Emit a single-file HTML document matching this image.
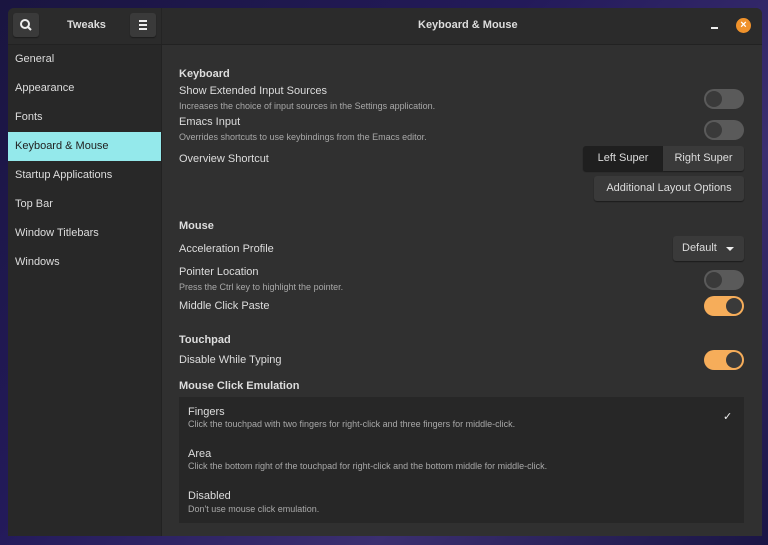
<!DOCTYPE html><html><head><style>
body{margin:0;width:768px;height:545px;overflow:hidden;background:linear-gradient(135deg,#1a1540 0%,#231a5a 40%,#3b2f70 70%,#1a1545 100%);font-family:"Liberation Sans",sans-serif;font-size:11px;color:#ddd}
.win{position:absolute;left:8px;top:8px;width:754px;height:528px;background:#303030;border-radius:6px 6px 0 0;overflow:hidden}
.hdr{position:absolute;left:0;top:0;width:754px;height:36px;background:#2b2b2b;border-bottom:1px solid #222}
.side{position:absolute;left:0;top:37px;width:153px;height:491px;background:#282828;border-right:1px solid #222}
.side div{height:29px;line-height:29px;padding-left:7px;color:#ddd}
.side .sel{background:#94e9eb;color:#222}
.btn{position:absolute;background:#3a3a3a;border-radius:3px;box-shadow:0 1px 1px #1c1c1c;color:#ddd;text-align:center}
.t{position:absolute;color:#ddd;white-space:nowrap}
.b{font-weight:bold}
.s{font-size:9px;color:#a8a8a8}
.sw{position:absolute;left:696px;width:40px;height:20px;border-radius:10px;background:#5a5a5a}
.sw i{position:absolute;top:2px;left:2px;width:16px;height:16px;border-radius:8px;background:#3a3a3a}
.sw.on{background:#f6ad5a}.sw.on i{left:22px}
</style></head><body>
<div class="win">
<div class="hdr">
<div class="btn" style="left:5px;top:5px;width:26px;height:24px"><svg width="26" height="24"><circle cx="12" cy="11" r="4" stroke="#eee" stroke-width="2" fill="none"/><line x1="15" y1="14" x2="18" y2="17" stroke="#eee" stroke-width="2"/></svg></div>
<div class="t b" style="left:59px;top:11px">Tweaks</div>
<div class="btn" style="left:122px;top:5px;width:26px;height:24px"><svg width="26" height="24"><path d="M9 8h8M9 12h8M9 16h8" stroke="#eee" stroke-width="2"/></svg></div>
<div style="position:absolute;left:153px;top:0;width:1px;height:36px;background:#242424"></div>
<div class="t b" style="left:410px;top:11px">Keyboard &amp; Mouse</div>
<div style="position:absolute;left:703px;top:19px;width:7px;height:2px;background:#eee"></div>
<div style="position:absolute;left:728px;top:10px;width:15px;height:15px;border-radius:8px;background:#f0922b;color:#fff;font-size:11px;font-weight:bold;text-align:center;line-height:15px">×</div>
</div>
<div class="side"><div>General</div><div>Appearance</div><div>Fonts</div><div class="sel">Keyboard &amp; Mouse</div><div>Startup Applications</div><div>Top Bar</div><div>Window Titlebars</div><div>Windows</div></div>
<div class="t b" style="left:171px;top:60px">Keyboard</div>
<div class="t" style="left:171px;top:77px">Show Extended Input Sources</div>
<div class="t s" style="left:171px;top:93px">Increases the choice of input sources in the Settings application.</div>
<div class="sw" style="top:81px"><i></i></div>
<div class="t" style="left:171px;top:108px">Emacs Input</div>
<div class="t s" style="left:171px;top:124px">Overrides shortcuts to use keybindings from the Emacs editor.</div>
<div class="sw" style="top:112px"><i></i></div>
<div class="t" style="left:171px;top:145px">Overview Shortcut</div>
<div class="btn" style="left:575px;top:138px;width:80px;height:25px;line-height:25px;background:#1f1f1f;border-radius:3px 0 0 3px">Left Super</div>
<div class="btn" style="left:655px;top:138px;width:81px;height:25px;line-height:25px;border-radius:0 3px 3px 0">Right Super</div>
<div class="btn" style="left:586px;top:168px;width:150px;height:25px;line-height:25px">Additional Layout Options</div>
<div class="t b" style="left:171px;top:212px">Mouse</div>
<div class="t" style="left:171px;top:235px">Acceleration Profile</div>
<div class="btn" style="left:665px;top:228px;width:71px;height:25px;line-height:25px;text-align:left"><span style="padding-left:9px">Default</span><span style="position:absolute;left:53px;top:11px;border:4px solid transparent;border-top:4px solid #eee"></span></div>
<div class="t" style="left:171px;top:258px">Pointer Location</div>
<div class="t s" style="left:171px;top:274px">Press the Ctrl key to highlight the pointer.</div>
<div class="sw" style="top:262px"><i></i></div>
<div class="t" style="left:171px;top:292px">Middle Click Paste</div>
<div class="sw on" style="top:288px"><i></i></div>
<div class="t b" style="left:171px;top:326px">Touchpad</div>
<div class="t" style="left:171px;top:346px">Disable While Typing</div>
<div class="sw on" style="top:342px"><i></i></div>
<div class="t b" style="left:171px;top:372px">Mouse Click Emulation</div>
<div style="position:absolute;left:171px;top:389px;width:565px;height:126px;background:#272727"></div>
<div class="t" style="left:180px;top:398px">Fingers</div>
<div class="t s" style="left:180px;top:411px">Click the touchpad with two fingers for right-click and three fingers for middle-click.</div>
<div class="t" style="left:715px;top:402px;color:#eee">✓</div>
<div class="t" style="left:180px;top:440px">Area</div>
<div class="t s" style="left:180px;top:453px">Click the bottom right of the touchpad for right-click and the bottom middle for middle-click.</div>
<div class="t" style="left:180px;top:482px">Disabled</div>
<div class="t s" style="left:180px;top:496px">Don't use mouse click emulation.</div>
</div>
</body></html>
